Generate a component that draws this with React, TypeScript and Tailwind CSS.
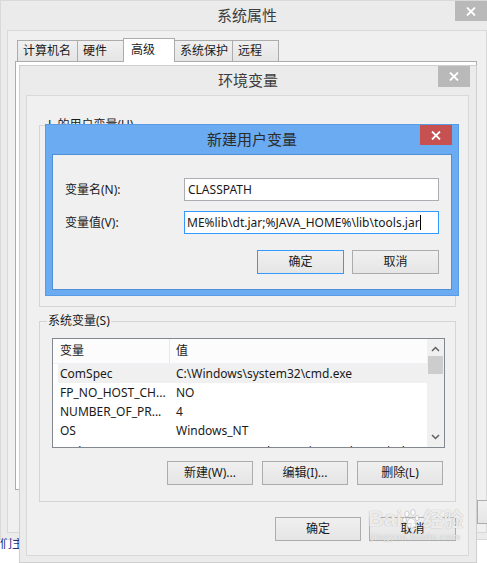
import clsx from "clsx"

const font = "font-['Noto_Sans','Noto_Sans_CJK_SC',sans-serif]"

const CloseX = () => (
  <svg width="10" height="9" viewBox="0 0 10 9">
    <path d="M1 0.5 L9 8.5 M9 0.5 L1 8.5" stroke="white" strokeWidth="1.8" />
  </svg>
)

const Btn = ({ label, primary, w = "w-[86px]" }: { label: string; primary?: boolean; w?: string }) => (
  <div
    className={clsx(
      "flex h-[24px] items-center justify-center border bg-linear-to-b from-[#f0f0f0] to-[#e5e5e5] text-[12px] text-[#1a1a1a]",
      w,
      primary ? "border-[#3399ff]" : "border-[#acacac]"
    )}
  >
    {label}
  </div>
)

const tabs = [
  { name: "计算机名", w: "w-[61px]" },
  { name: "硬件", w: "w-[47px]" },
  { name: "高级", w: "w-[52px]", active: true },
  { name: "系统保护", w: "w-[59px]" },
  { name: "远程", w: "w-[47px]" },
]

const sysVars = [
  ["ComSpec", "C:\\Windows\\system32\\cmd.exe"],
  ["FP_NO_HOST_CH...", "NO"],
  ["NUMBER_OF_PR...", "4"],
  ["OS", "Windows_NT"],
  ["Path", "C:\\ProgramData\\Oracle\\Java\\javapath;C:\\Windows"],
]

function SystemProperties() {
  return (
    <div className="absolute left-0 top-0 flex h-[540px] w-[494px] flex-col border border-[#d9d9d9] bg-[#ebebeb]">
      <div className="relative flex h-[29px] items-center justify-center text-[15px] text-[#3c3c3c]">
        系统属性
        <div className="absolute right-[6px] top-0 flex h-[20px] w-[32px] items-center justify-center bg-[#b9b9b9]">
          <CloseX />
        </div>
      </div>
      <div className="mx-[6px] mb-[6px] flex flex-1 flex-col border border-[#d9d9d9] bg-[#f0f0f0] pt-[8px]">
        <div className="flex h-[22px] items-end pl-[9px]">
          {tabs.map((t, i) => (
            <div
              key={t.name}
              className={clsx(
                "flex border border-b-0 border-[#acacac] text-[12px] text-[#1a1a1a]",
                t.w,
                i > 0 && "-ml-px",
                t.active
                  ? "relative z-10 -mb-px h-[24px] items-start bg-white pl-[7px] pt-[2px]"
                  : "h-[21px] items-center bg-linear-to-b from-[#f0f0f0] to-[#e5e5e5] pl-[5px]"
              )}
            >
              {t.name}
            </div>
          ))}
        </div>
        <div className="ml-[7px] h-[429px] w-[462px] border border-[#acacac] bg-white" />
        <div className="ml-[469px] mt-[10px]">
          <Btn label="应用(A)" />
        </div>
      </div>
    </div>
  )
}

function GroupBox({ label, className, children }: { label: string; className: string; children?: React.ReactNode }) {
  return (
    <div className={clsx("relative mx-[12px] border border-[#d5d5d5]", className)}>
      <span className="absolute -top-[9px] left-[7px] bg-[#f0f0f0] px-px text-[12px] leading-[16px] text-[#1a1a1a]">
        {label}
      </span>
      {children}
    </div>
  )
}

function VarList() {
  return (
    <div className="ml-[12px] mt-[16px] flex h-[110px] w-[393px] border border-[#828790] bg-white">
      <div className="flex-1 overflow-hidden">
        <div className="flex h-[25px] items-center border-b border-[#eef2f7] bg-[#fcfcfd] text-[12px] text-[#1a1a1a]">
          <div className="flex h-full w-[117px] items-center border-r border-[#e5e9ef] pl-[7px]">变量</div>
          <div className="pl-[6px]">值</div>
        </div>
        {sysVars.map(([k, v], i) => (
          <div
            key={k}
            className={clsx(
              "ml-[5px] flex h-[19px] items-center whitespace-nowrap text-[12px] text-[#1a1a1a]",
              i === 0 && "bg-[#f0f0f0]",
              i === 4 && "pt-[4px]"
            )}
          >
            <div className="w-[112px] pl-[2px]">{k}</div>
            <div className="pl-[6px]">{v}</div>
          </div>
        ))}
      </div>
      <div className="flex w-[17px] flex-col items-center bg-[#f0f0f0]">
        <svg width="9" height="6" viewBox="0 0 9 6" className="mt-[7px]">
          <path d="M1 5 L4.5 1.5 L8 5" fill="none" stroke="#606060" strokeWidth="1.5" />
        </svg>
        <div className="mt-[4px] h-[18px] w-[15px] bg-[#cdcdcd]" />
        <div className="flex-1" />
        <svg width="9" height="6" viewBox="0 0 9 6" className="mb-[7px]">
          <path d="M1 1 L4.5 4.5 L8 1" fill="none" stroke="#606060" strokeWidth="1.5" />
        </svg>
      </div>
    </div>
  )
}

function EnvironmentVariables() {
  return (
    <div className="absolute left-[19px] top-[65px] flex h-[498px] w-[458px] flex-col border border-[#cfcfcf] bg-[#ebebeb]">
      <div className="relative flex h-[29px] items-center justify-center text-[15px] text-[#3c3c3c]">
        环境变量
        <div className="absolute right-[6px] top-0 flex h-[21px] w-[32px] items-center justify-center bg-[#b9b9b9]">
          <CloseX />
        </div>
      </div>
      <div className="ml-[6px] mr-[7px] mb-[6px] flex flex-1 flex-col border border-[#d9d9d9] bg-[#f0f0f0]">
        <GroupBox label="L 的用户变量(U)" className="mt-[29px] h-[182px]" />
        <GroupBox label="系统变量(S)" className="mt-[14px] h-[181px]">
          <VarList />
          <div className="mr-[12px] mt-[13px] flex justify-end gap-[9px]">
            <Btn label="新建(W)..." />
            <Btn label="编辑(I)..." />
            <Btn label="删除(L)" />
          </div>
        </GroupBox>
        <div className="mr-[12px] mt-[15px] flex justify-end gap-[8px]">
          <Btn label="确定" />
          <Btn label="取消" w="w-[87px]" />
        </div>
      </div>
    </div>
  )
}

function NewUserVariable() {
  return (
    <div className="absolute left-[45px] top-[124px] flex h-[172px] w-[414px] flex-col border border-[#5b9be6] bg-[#6aabf2]">
      <div className="relative flex h-[29px] items-center justify-center text-[15px] text-[#2b2b2b]">
        新建用户变量
        <div className="absolute right-[6px] top-0 flex h-[20px] w-[32px] items-center justify-center bg-[#c75050]">
          <CloseX />
        </div>
      </div>
      <div className="mx-[6px] mb-[5px] flex flex-1 flex-col border border-[#4f8fd6] bg-[#f0f0f0] px-[12px] pt-[23px]">
        <div className="flex h-[23px] items-center">
          <div className="w-[119px] text-[12px] text-[#1a1a1a]">变量名(N):</div>
          <div className="flex h-full flex-1 items-center border border-[#abadb3] bg-white pl-[3px] text-[12px] text-[#1a1a1a]">
            CLASSPATH
          </div>
        </div>
        <div className="mt-[10px] flex h-[23px] items-center">
          <div className="w-[119px] text-[12px] text-[#1a1a1a]">变量值(V):</div>
          <div className="flex h-full flex-1 items-center overflow-hidden whitespace-nowrap border border-[#3399ff] bg-white pl-[2px] text-[12px] text-[#1a1a1a]">
            ME%lib\dt.jar;%JAVA_HOME%\lib\tools.jar
            <span className="h-[15px] w-px bg-black" />
          </div>
        </div>
        <div className="mt-[16px] flex justify-end gap-[8px]">
          <Btn label="确定" primary w="w-[87px]" />
          <Btn label="取消" w="w-[87px]" />
        </div>
      </div>
    </div>
  )
}

function Watermark() {
  return (
    <div className="pointer-events-none absolute left-[368px] top-[508px] flex flex-col items-center text-white/80 [text-shadow:0_0_1px_#9a9a9a]">
      <div className="flex items-end leading-none">
        <span className="font-['Liberation_Sans',sans-serif] text-[22px] font-bold">Bai</span>
        <svg width="20" height="22" viewBox="0 0 20 22" className="-mb-px">
          <g fill="white" fillOpacity="0.8" stroke="#b0b0b0" strokeWidth="0.6">
            <ellipse cx="5" cy="5" rx="2.2" ry="3" />
            <ellipse cx="11" cy="3.5" rx="2.2" ry="3" />
            <ellipse cx="2.5" cy="11" rx="2" ry="2.6" />
            <ellipse cx="15" cy="9" rx="2" ry="2.6" />
            <path d="M8 9 C4 13 3 19 8 19 C11 19 13 19 14 16 C15 13 11 9 8 9 Z" />
          </g>
        </svg>
        <span className="ml-px text-[20px] font-bold">经验</span>
      </div>
      <div className="font-['Liberation_Serif',serif] text-[11px] leading-[12px] tracking-[0.5px]">jingyan.baidu.com</div>
    </div>
  )
}

export default function App() {
  return (
    <div className={clsx("relative h-[563px] w-[487px] overflow-hidden bg-white", font)}>
      <SystemProperties />
      <div className="absolute left-0 top-[538px] h-[12px] overflow-hidden text-[12px] leading-[12px] text-[#23308a]">们主用</div>
      <EnvironmentVariables />
      <NewUserVariable />
      <Watermark />
    </div>
  )
}
